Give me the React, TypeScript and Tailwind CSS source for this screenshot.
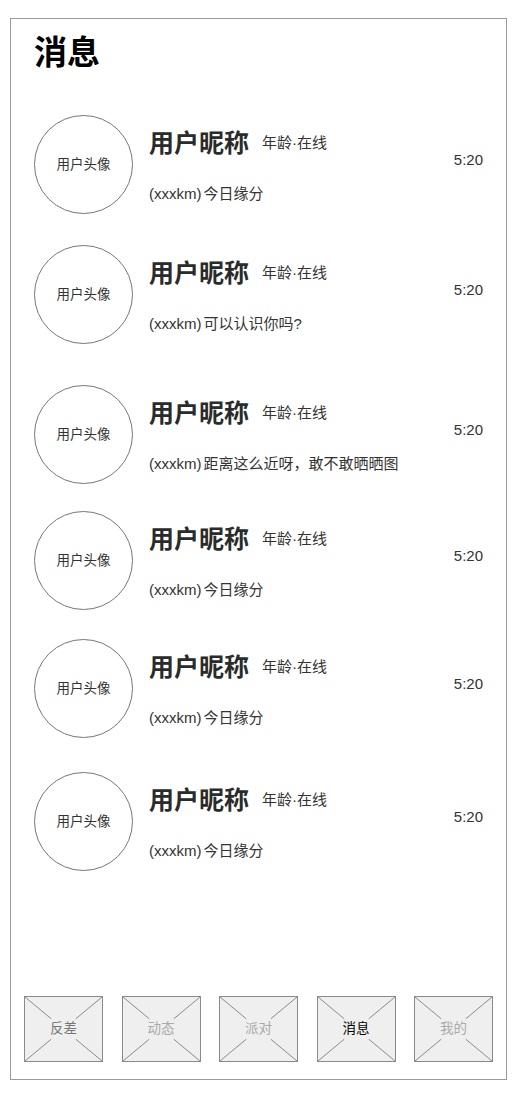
const font = "font-['Helvetica_Neue','Liberation_Sans','Noto_Sans_CJK_SC',sans-serif]";

const messages = [
  { gap: "mt-[43px]", text: "(xxxkm)今日缘分" },
  { gap: "mt-[31px]", text: "(xxxkm)可以认识你吗?" },
  { gap: "mt-[41px]", text: "(xxxkm)距离这么近呀，敢不敢晒晒图" },
  { gap: "mt-[27px]", text: "(xxxkm)今日缘分" },
  { gap: "mt-[29px]", text: "(xxxkm)今日缘分" },
  { gap: "mt-[34px]", text: "(xxxkm)今日缘分" },
];

const tabs = [
  { label: "反差", color: "text-[#777]" },
  { label: "动态", color: "text-[#aaa]" },
  { label: "派对", color: "text-[#aaa]" },
  { label: "消息", color: "text-black" },
  { label: "我的", color: "text-[#aaa]" },
];

const MessageRow = ({ gap, text }: { gap: string; text: string }) => (
  <div className={`${gap} flex items-start pl-[23px] pr-[23px]`}>
    <div className="w-[99px] h-[99px] shrink-0 rounded-full border border-[#777] flex items-center justify-center">
      <span className="text-[13.5px] leading-5 text-[#333]">用户头像</span>
    </div>
    <div className="flex-1 pl-[16px] pt-[12px]">
      <div className="flex items-center h-[32px]">
        <span className="text-[25px] leading-[32px] font-bold text-[#2b2b2b]">用户昵称</span>
        <span className="ml-[13px] text-[15px] leading-5 text-[#333]">年龄·在线</span>
      </div>
      <div className="mt-[25px] text-[15px] leading-5 text-[#333]">
        (xxxkm)<span className="ml-[2px]">{text.slice(7)}</span>
      </div>
    </div>
    <div className="pt-[35px] text-[15px] leading-5 text-[#333]">5:20</div>
  </div>
);

const TabBox = ({ label, color }: { label: string; color: string }) => (
  <div className="relative w-[79px] h-[66px] border border-[#8a8a8a] bg-[#efefef] flex items-center justify-center">
    <svg className="absolute inset-0 w-full h-full" viewBox="0 0 100 100" preserveAspectRatio="none">
      <g stroke="#8a8a8a" strokeWidth="1">
        <line x1="0" y1="0" x2="34" y2="34" vectorEffect="non-scaling-stroke" />
        <line x1="66" y1="66" x2="100" y2="100" vectorEffect="non-scaling-stroke" />
        <line x1="100" y1="0" x2="66" y2="34" vectorEffect="non-scaling-stroke" />
        <line x1="34" y1="66" x2="0" y2="100" vectorEffect="non-scaling-stroke" />
      </g>
    </svg>
    <span className={`relative text-[13.5px] leading-5 ${color}`}>{label}</span>
  </div>
);

export default function App() {
  return (
    <div className={`w-[516px] h-[1096px] bg-white pt-[18px] pl-[10px] ${font}`}>
      <div className="w-[497px] h-[1062px] border border-[#9a9a9a] flex flex-col">
        <h1 className="pt-[14px] pl-[23px] text-[33px] leading-[40px] font-bold text-black">消息</h1>
        <div className="-mt-[1px]">
          {messages.map((m, i) => (
            <MessageRow key={i} gap={m.gap} text={m.text} />
          ))}
        </div>
        <div className="mt-auto mb-[17px] px-[13px] flex justify-between">
          {tabs.map((t) => (
            <TabBox key={t.label} label={t.label} color={t.color} />
          ))}
        </div>
      </div>
    </div>
  );
}
